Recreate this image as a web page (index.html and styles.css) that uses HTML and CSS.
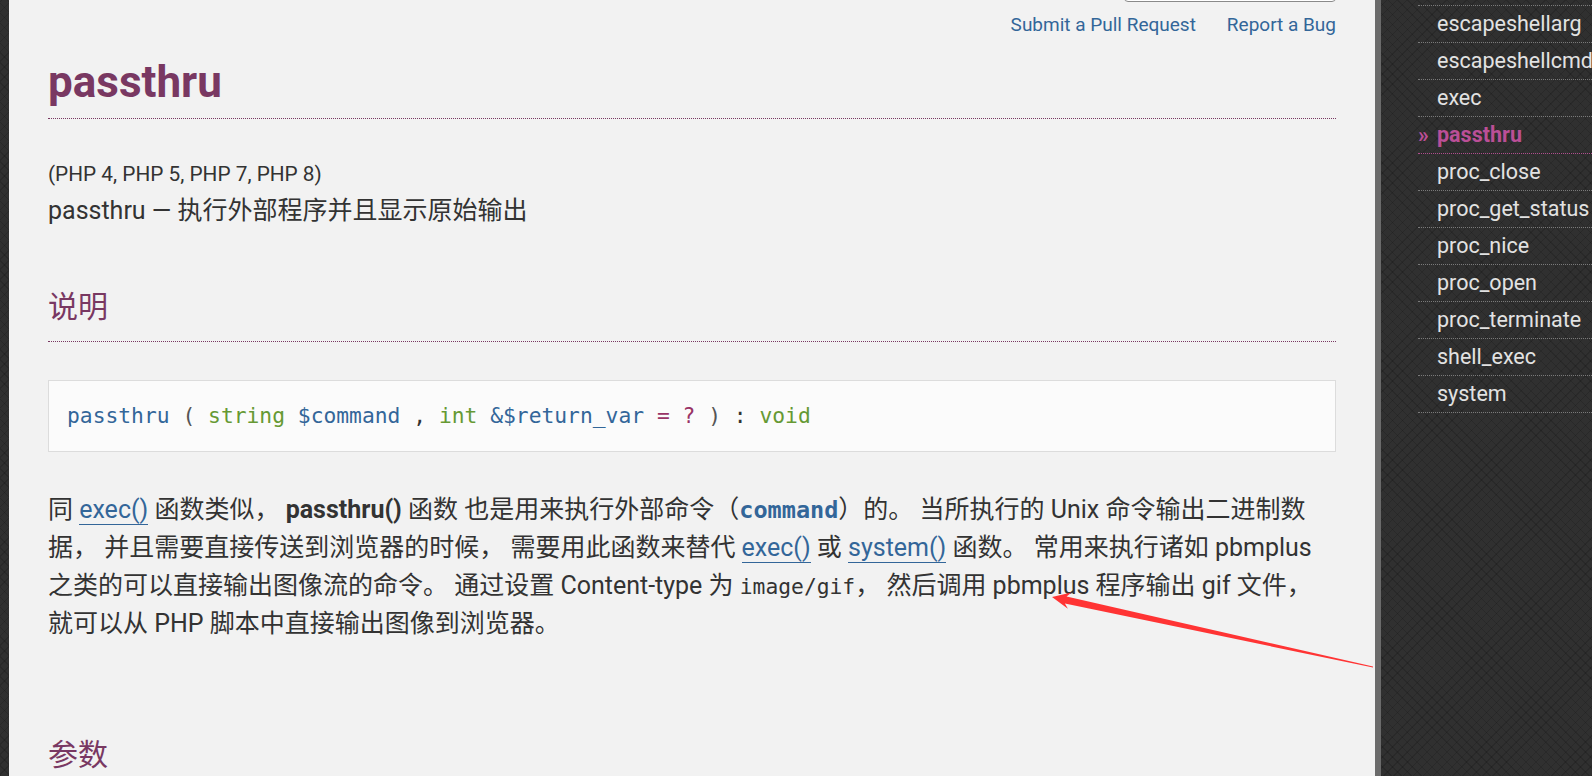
FILE: index.html
```html
<!DOCTYPE html>
<html lang="zh-CN">
<head>
<meta charset="utf-8">
<title>PHP: passthru - Manual</title>
<link rel="stylesheet" href="styles.css">
</head>
<body>
<div class="layout">
  <div class="edge"></div>
  <main class="content">
    <div class="top">
      <div class="search"></div>
      <nav class="edit-links">
        <a href="#">Submit a Pull Request</a>
        <a href="#">Report a Bug</a>
      </nav>
    </div>
    <h1 class="refname">passthru</h1>
    <p class="verinfo">(PHP 4, PHP 5, PHP 7, PHP 8)</p>
    <p class="refpurpose">passthru — 执行外部程序并且显示原始输出</p>
    <h2 class="section-title">说明</h2>
    <div class="methodsynopsis"><span class="methodname">passthru</span> <span class="paren">(</span> <span class="type">string</span> <span class="parameter">$command</span> , <span class="type">int</span> <span class="parameter">&amp;$return_var</span> <span class="initializer">= ?</span> <span class="paren">)</span> : <span class="type">void</span></div>
    <p class="para">同 <a class="fn" href="#">exec()</a> 函数类似， <strong>passthru()</strong> 函数 也是用来执行外部命令（<code class="param">command</code>）的。 当所执行的 Unix 命令输出二进制数据， 并且需要直接传送到浏览器的时候， 需要用此函数来替代 <a class="fn" href="#">exec()</a> 或 <a class="fn" href="#">system()</a> 函数。 常用来执行诸如 pbmplus 之类的可以直接输出图像流的命令。 通过设置 Content-type 为 <code class="literal">image/gif</code>， 然后调用 pbmplus 程序输出 gif 文件， 就可以从 PHP 脚本中直接输出图像到浏览器。</p>
    <h2 class="section-title plain">参数</h2>
  </main>
  <div class="divider"></div>
  <aside class="sidebar">
    <ul class="menu">
      <li><a href="#">escapeshellarg</a></li>
      <li><a href="#">escapeshellcmd</a></li>
      <li><a href="#">exec</a></li>
      <li class="current"><a href="#">passthru</a></li>
      <li><a href="#">proc_close</a></li>
      <li><a href="#">proc_get_status</a></li>
      <li><a href="#">proc_nice</a></li>
      <li><a href="#">proc_open</a></li>
      <li><a href="#">proc_terminate</a></li>
      <li><a href="#">shell_exec</a></li>
      <li><a href="#">system</a></li>
    </ul>
  </aside>
</div>
<svg class="arrow" width="1592" height="776" viewBox="0 0 1592 776">
  <polygon points="1052,597 1071.5,592.5 1066.6,596.6 1373,666.4 1373,667.6 1064.9,603.4 1067.9,608.8" fill="#ff3434"/>
</svg>
</body>
</html>
```
FILE: styles.css
```css
* { box-sizing: border-box; }
html, body { margin: 0; padding: 0; }
body {
  width: 1592px;
  height: 776px;
  overflow: hidden;
  position: relative;
  font-family: Roboto, "Noto Sans CJK SC", sans-serif;
  color: #333;
  background: #2f2f2f;
}
.layout {
  display: grid;
  grid-template-columns: 9px 1366px 6px 1fr;
  height: 776px;
}
.edge, .sidebar {
  background-color: #303030;
  background-image:
    repeating-linear-gradient(45deg, rgba(0,0,0,0.14) 0 1px, transparent 1px 7px),
    repeating-linear-gradient(-45deg, rgba(0,0,0,0.14) 0 1px, transparent 1px 7px);
}
.divider { background: #6b6b6b; }
.content {
  background: #f2f2f2;
  padding: 0 39px;
  overflow: hidden;
}
.top {
  display: flex;
  flex-direction: column;
  align-items: flex-end;
}
.search {
  width: 212px;
  height: 30px;
  margin-top: -28px;
  border: 1px solid #8a8a8a;
  border-radius: 4px;
  background: #fff;
}
.edit-links {
  display: flex;
  gap: 31px;
  margin-top: 11px;
  font-size: 19px;
  line-height: 24px;
}
.edit-links a { color: #369; text-decoration: none; }
.refname {
  margin: 16px 0 0;
  font-size: 44px;
  line-height: 58px;
  font-weight: 700;
  color: #793862;
  padding-bottom: 7px;
  border-bottom: 1px dotted #793862;
}
.verinfo {
  margin: 40px 0 0;
  font-size: 20.8px;
  line-height: 30px;
}
.refpurpose {
  margin: 4px 0 0;
  font-size: 25px;
  line-height: 36px;
}
.section-title {
  margin: 58px 0 0;
  font-size: 30px;
  line-height: 40px;
  font-weight: 400;
  color: #793862;
  padding-bottom: 14px;
  border-bottom: 1px dotted #793862;
}
.section-title.plain {
  margin-top: 93px;
  border-bottom: none;
}
.methodsynopsis {
  margin-top: 38px;
  height: 72px;
  padding: 20px 18px;
  background: #fbfbfb;
  border: 1px solid #dcdcdc;
  font-family: "DejaVu Sans Mono", monospace;
  font-size: 21.3px;
  line-height: 30px;
  color: #333;
  white-space: nowrap;
}
.methodname { color: #369; }
.paren { color: #555; }
.type { color: #693; }
.parameter { color: #369; }
.initializer { color: #936; }
.para {
  margin: 39px 0 0;
  font-size: 25px;
  line-height: 37.3px;
}
.para strong { font-weight: 700; color: #333; }
.para a.fn {
  color: #369;
  text-decoration: none;
  border-bottom: 1px solid #369;
}
.para code {
  font-family: "DejaVu Sans Mono", monospace;
  font-size: 21.3px;
}
.para code.param { font-weight: 700; color: #369; font-size: 23.5px; }
.sidebar { overflow: hidden; }
.menu {
  list-style: none;
  margin: 5px 0 0 37px;
  padding: 0;
  border-top: 1px dotted #7a7a7a;
  width: 260px;
}
.menu li {
  border-bottom: 1px dotted #7a7a7a;
  height: 37px;
  padding-left: 19px;
  font-size: 21.5px;
  line-height: 36px;
  white-space: nowrap;
}
.menu a { color: #e2e2e2; text-decoration: none; }
.menu li.current { border-bottom-color: #b04c8e; }
.menu li.current a { color: #bb4f97; font-weight: 700; }
.menu li.current a::before {
  content: "»";
  display: inline-block;
  width: 19px;
  margin-left: -19px;
}
.arrow {
  position: absolute;
  left: 0;
  top: 0;
  pointer-events: none;
}
```
